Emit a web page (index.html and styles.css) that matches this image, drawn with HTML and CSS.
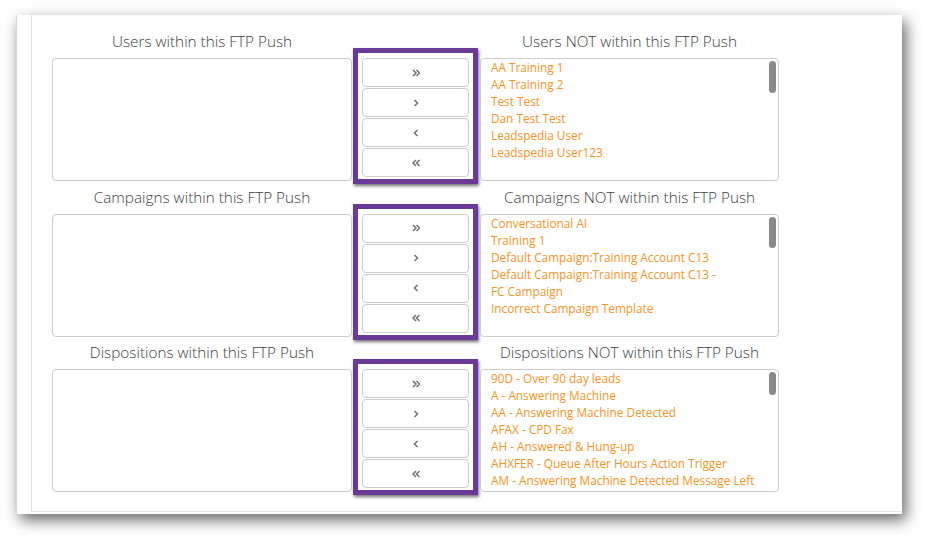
FILE: index.html
```html
<!DOCTYPE html>
<html lang="en">
<head>
<meta charset="utf-8">
<title>FTP Push</title>
<link rel="stylesheet" href="styles.css">
</head>
<body>
<svg width="0" height="0" class="defs">
  <defs>
    <g id="ic-dr"><path d="M1 1l3 3-3 3M4.5 1l3 3-3 3" fill="none" stroke="currentColor" stroke-width="1.5"/></g>
    <g id="ic-r"><path d="M2.5 1l3 3-3 3" fill="none" stroke="currentColor" stroke-width="1.5"/></g>
    <g id="ic-l"><path d="M5.5 1l-3 3 3 3" fill="none" stroke="currentColor" stroke-width="1.5"/></g>
    <g id="ic-dl"><path d="M4 1L1 4l3 3M7.5 1l-3 3 3 3" fill="none" stroke="currentColor" stroke-width="1.5"/></g>
  </defs>
</svg>
<div class="panel">
  <div class="content">
    <section class="row">
      <div class="col">
        <div class="label">Users within this FTP Push</div>
        <div class="listbox"></div>
      </div>
      <div class="movers">
        <button class="btn"><svg viewBox="0 0 8 8"><use href="#ic-dr"/></svg></button>
        <button class="btn"><svg viewBox="0 0 8 8"><use href="#ic-r"/></svg></button>
        <button class="btn"><svg viewBox="0 0 8 8"><use href="#ic-l"/></svg></button>
        <button class="btn"><svg viewBox="0 0 8 8"><use href="#ic-dl"/></svg></button>
      </div>
      <div class="col col-right">
        <div class="label">Users NOT within this FTP Push</div>
        <div class="listbox">
          <div class="item">AA Training 1</div>
          <div class="item">AA Training 2</div>
          <div class="item">Test Test</div>
          <div class="item">Dan Test Test</div>
          <div class="item">Leadspedia User</div>
          <div class="item">Leadspedia User123</div>
          <div class="thumb thumb-a"></div>
        </div>
      </div>
    </section>
    <section class="row">
      <div class="col">
        <div class="label">Campaigns within this FTP Push</div>
        <div class="listbox"></div>
      </div>
      <div class="movers">
        <button class="btn"><svg viewBox="0 0 8 8"><use href="#ic-dr"/></svg></button>
        <button class="btn"><svg viewBox="0 0 8 8"><use href="#ic-r"/></svg></button>
        <button class="btn"><svg viewBox="0 0 8 8"><use href="#ic-l"/></svg></button>
        <button class="btn"><svg viewBox="0 0 8 8"><use href="#ic-dl"/></svg></button>
      </div>
      <div class="col col-right">
        <div class="label">Campaigns NOT within this FTP Push</div>
        <div class="listbox">
          <div class="item">Conversational AI</div>
          <div class="item">Training 1</div>
          <div class="item">Default Campaign:Training Account C13</div>
          <div class="item">Default Campaign:Training Account C13 -<br>FC Campaign</div>
          <div class="item">Incorrect Campaign Template</div>
          <div class="thumb thumb-b"></div>
        </div>
      </div>
    </section>
    <section class="row">
      <div class="col">
        <div class="label">Dispositions within this FTP Push</div>
        <div class="listbox"></div>
      </div>
      <div class="movers">
        <button class="btn"><svg viewBox="0 0 8 8"><use href="#ic-dr"/></svg></button>
        <button class="btn"><svg viewBox="0 0 8 8"><use href="#ic-r"/></svg></button>
        <button class="btn"><svg viewBox="0 0 8 8"><use href="#ic-l"/></svg></button>
        <button class="btn"><svg viewBox="0 0 8 8"><use href="#ic-dl"/></svg></button>
      </div>
      <div class="col col-right">
        <div class="label">Dispositions NOT within this FTP Push</div>
        <div class="listbox">
          <div class="item">90D - Over 90 day leads</div>
          <div class="item">A - Answering Machine</div>
          <div class="item">AA - Answering Machine Detected</div>
          <div class="item">AFAX - CPD Fax</div>
          <div class="item">AH - Answered &amp; Hung-up</div>
          <div class="item">AHXFER - Queue After Hours Action Trigger</div>
          <div class="item">AM - Answering Machine Detected Message Left</div>
          <div class="thumb thumb-c"></div>
        </div>
      </div>
    </section>
  </div>
</div>
</body>
</html>
```
FILE: styles.css
```css
* { box-sizing: border-box; }
html, body {
  margin: 0;
  padding: 0;
  background: #ffffff;
  width: 927px;
  height: 541px;
  overflow: hidden;
  font-family: "Open Sans", "Liberation Sans", sans-serif;
}
.defs { position: absolute; width: 0; height: 0; }
.panel {
  margin: 15px 0 0 16px;
  width: 886px;
  height: 499px;
  background: #ffffff;
  border-left: 1px solid #d9d9d9;
  box-shadow: 4px 6px 14px rgba(0, 0, 0, 0.6);
}
.content {
  margin-left: 14px;
  height: 497px;
  border-left: 1px solid #e3e3e3;
  border-bottom: 1px solid #e3e3e3;
  padding: 16px 0 0 20px;
  display: grid;
  grid-template-rows: 155.5px 155.5px 155.5px;
  align-content: start;
}
.row {
  display: flex;
  align-items: flex-start;
}
.col {
  width: 300px;
  display: flex;
  flex-direction: column;
}
.col-right { width: 299px; margin-left: 2px; }
.label {
  height: 20px;
  line-height: 20px;
  font-size: 15.3px;
  font-weight: 300;
  color: #404040;
  text-align: center;
  white-space: nowrap;
  margin-bottom: 7px;
}
.listbox {
  position: relative;
  height: 123px;
  border: 1px solid #cccccc;
  border-radius: 4px;
  background: #ffffff;
  padding: 0 0 0 10px;
  overflow: hidden;
}
.item {
  font-size: 11.8px;
  line-height: 17px;
  color: #f7941d;
  white-space: nowrap;
}
.thumb {
  position: absolute;
  right: 2px;
  top: 2px;
  width: 7px;
  border-radius: 4px;
  background: #8a8a8a;
}
.thumb-a { height: 32px; }
.thumb-b { height: 31px; }
.thumb-c { height: 23px; }
.movers {
  margin: 17px 0 0 1px;
  width: 125px;
  height: 136px;
  border: 5px solid #6b3a96;
  box-shadow: 1px 2px 3px rgba(0, 0, 0, 0.55);
  padding: 5px 4px 2px 4px;
  display: flex;
  flex-direction: column;
  gap: 1px;
  background: #ffffff;
}
.btn {
  width: 107px;
  height: 29px;
  margin: 0;
  padding: 0;
  border: 1px solid #cccccc;
  border-radius: 4px;
  background: #ffffff;
  color: #707070;
  display: flex;
  align-items: center;
  justify-content: center;
}
.btn svg {
  width: 8px;
  height: 8px;
  display: block;
}
```
